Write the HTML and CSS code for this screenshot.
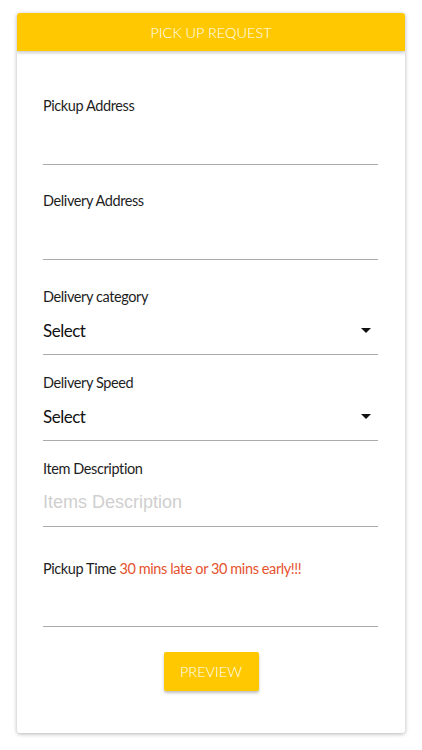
FILE: index.html
```html
<!DOCTYPE html>
<html>
<head>
<meta charset="utf-8">
<link rel="stylesheet" href="styles.css">
</head>
<body>
<div class="card">
  <div class="header">PICK UP REQUEST</div>
  <div class="form">
    <div class="field f1">
      <div class="label">Pickup Address</div>
      <div class="input text"></div>
    </div>
    <div class="field f2">
      <div class="label">Delivery Address</div>
      <div class="input text"></div>
    </div>
    <div class="field f3">
      <div class="label">Delivery category</div>
      <div class="input select"><span>Select</span><span class="arrow"></span></div>
    </div>
    <div class="field f4">
      <div class="label">Delivery Speed</div>
      <div class="input select"><span>Select</span><span class="arrow"></span></div>
    </div>
    <div class="field f4">
      <div class="label">Item Description</div>
      <div class="input placeholder">Items Description</div>
    </div>
    <div class="field f6">
      <div class="label">Pickup Time <span class="warn">30 mins late or 30 mins early!!!</span></div>
      <div class="input text last"></div>
    </div>
    <div class="actions">
      <button class="preview">PREVIEW</button>
    </div>
  </div>
</div>
</body>
</html>
```
FILE: styles.css
```css
html, body {
  margin: 0;
  padding: 0;
  background: #ffffff;
}
body {
  padding: 13px 17px;
  font-family: Lato, "Open Sans", sans-serif;
}
.card {
  width: 388px;
  background: #fff;
  border-radius: 3px;
  box-shadow: 0 1px 4px rgba(0,0,0,0.3);
  overflow: hidden;
}
.header {
  height: 38px;
  background: #ffc800;
  color: #fff;
  font-size: 14.5px;
  font-weight: 300;
  display: flex;
  align-items: center;
  justify-content: center;
  box-shadow: 0 2px 3px rgba(0,0,0,0.2);
  position: relative;
}
.form {
  padding: 0 27px 42px 26px;
}
.field {
  border-bottom: 1px solid #aaaaaa;
}
.f1 { padding-top: 45px; }
.f2 { padding-top: 26px; }
.f3 { padding-top: 27px; }
.f4 { padding-top: 18px; }
.f6 { padding-top: 32px; }
.label {
  font-size: 14.5px;
  letter-spacing: -0.4px;
  line-height: 20px;
  color: #1e1e1e;
  white-space: nowrap;
}
.warn {
  color: #e5532e;
}
.input.text { height: 48px; }
.input.last { height: 47px; }
.input.select {
  height: 47px;
  display: flex;
  align-items: center;
  justify-content: space-between;
  font-size: 17px;
  letter-spacing: -0.5px;
  color: #111;
  padding-right: 7px;
}
.arrow {
  width: 0;
  height: 0;
  border-left: 5px solid transparent;
  border-right: 5px solid transparent;
  border-top: 5px solid #111;
}
.input.placeholder {
  height: 47px;
  display: flex;
  align-items: center;
  font-family: "Liberation Sans", Arial, sans-serif;
  font-size: 18px;
  color: #cfcfcf;
}
.actions {
  display: flex;
  justify-content: center;
  padding-top: 25px;
}
.preview {
  width: 95px;
  height: 39px;
  border: none;
  border-radius: 2px;
  background: #ffc800;
  color: #fff;
  font-family: Lato, sans-serif;
  font-size: 14.5px;
  font-weight: 300;
  box-shadow: 0 2px 3px rgba(0,0,0,0.25);
  margin-left: 1px;
}
```
